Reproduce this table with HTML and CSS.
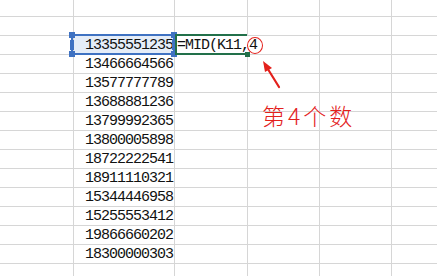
FILE: index.html
```html
<!DOCTYPE html>
<html>
<head>
<meta charset="utf-8">
<link rel="stylesheet" href="styles.css">
</head>
<body>
<div class="sheet">
  <div class="row first"><div class="c c0"></div><div class="c c1"></div><div class="c c2"></div><div class="c c3"></div><div class="c c4"></div><div class="c c5"></div></div>
  <div class="row"><div class="c c0"></div><div class="c c1"></div><div class="c c2"></div><div class="c c3"></div><div class="c c4"></div><div class="c c5"></div></div>
  <div class="row"><div class="c c0"></div><div class="c c1 num sel">13355551235</div><div class="c c2 formula">=MID(K11,4</div><div class="c c3"></div><div class="c c4"></div><div class="c c5"></div></div>
  <div class="row"><div class="c c0"></div><div class="c c1 num">13466664566</div><div class="c c2"></div><div class="c c3"></div><div class="c c4"></div><div class="c c5"></div></div>
  <div class="row"><div class="c c0"></div><div class="c c1 num">13577777789</div><div class="c c2"></div><div class="c c3"></div><div class="c c4"></div><div class="c c5"></div></div>
  <div class="row"><div class="c c0"></div><div class="c c1 num">13688881236</div><div class="c c2"></div><div class="c c3"></div><div class="c c4"></div><div class="c c5"></div></div>
  <div class="row"><div class="c c0"></div><div class="c c1 num">13799992365</div><div class="c c2"></div><div class="c c3"></div><div class="c c4"></div><div class="c c5"></div></div>
  <div class="row"><div class="c c0"></div><div class="c c1 num">13800005898</div><div class="c c2"></div><div class="c c3"></div><div class="c c4"></div><div class="c c5"></div></div>
  <div class="row"><div class="c c0"></div><div class="c c1 num">18722222541</div><div class="c c2"></div><div class="c c3"></div><div class="c c4"></div><div class="c c5"></div></div>
  <div class="row"><div class="c c0"></div><div class="c c1 num">18911110321</div><div class="c c2"></div><div class="c c3"></div><div class="c c4"></div><div class="c c5"></div></div>
  <div class="row"><div class="c c0"></div><div class="c c1 num">15344446958</div><div class="c c2"></div><div class="c c3"></div><div class="c c4"></div><div class="c c5"></div></div>
  <div class="row"><div class="c c0"></div><div class="c c1 num">15255553412</div><div class="c c2"></div><div class="c c3"></div><div class="c c4"></div><div class="c c5"></div></div>
  <div class="row"><div class="c c0"></div><div class="c c1 num">19866660202</div><div class="c c2"></div><div class="c c3"></div><div class="c c4"></div><div class="c c5"></div></div>
  <div class="row"><div class="c c0"></div><div class="c c1 num">18300000303</div><div class="c c2"></div><div class="c c3"></div><div class="c c4"></div><div class="c c5"></div></div>
  <div class="row"><div class="c c0"></div><div class="c c1"></div><div class="c c2"></div><div class="c c3"></div><div class="c c4"></div><div class="c c5"></div></div>

  <div class="selbox">
    <span class="h h-tl"></span><span class="h h-tr"></span><span class="h h-bl"></span><span class="h h-br"></span>
    <span class="h h-ml"></span><span class="h h-mr"></span>
  </div>
  <div class="editbox"><span class="fill"></span></div>
  <div class="ring"></div>
  <svg class="arrow" width="40" height="40" viewBox="0 0 40 40">
    <line x1="29" y1="36" x2="16" y2="15" stroke="#e3211c" stroke-width="2.2" stroke-linecap="round"/>
    <polygon points="13,10 22,17 15,21" fill="#e3211c"/>
  </svg>
  <div class="note">第4个数</div>
</div>
</body>
</html>
```
FILE: styles.css
```css
html, body { margin: 0; padding: 0; background: #fff; }
.sheet {
  position: relative;
  width: 437px;
  height: 276px;
  overflow: hidden;
  font-family: "Liberation Mono", "DejaVu Sans Mono", monospace;
}
.row { display: flex; height: 19px; }
.row.first { height: 17px; }
.c {
  box-sizing: border-box;
  border-right: 1px solid #d6d6d6;
  border-bottom: 1px solid #d6d6d6;
  flex: none;
  height: 100%;
}
.c0 { width: 74px; }
.c1 { width: 101px; }
.c2 { width: 73px; }
.c3 { width: 72px; }
.c4 { width: 72px; }
.c5 { width: 60px; }
.num {
  text-align: right;
  font-size: 15px;
  letter-spacing: -1px;
  line-height: 20px;
  padding-right: 1px;
  color: #111;
  white-space: nowrap;
}
.sel { background: #e5edf8; }
.formula {
  border-right: none;
  white-space: nowrap;
  overflow: visible;
  font-size: 15px;
  letter-spacing: -1px;
  line-height: 20px;
  padding-left: 2px;
  color: #111;
}
.selbox {
  position: absolute;
  left: 71px;
  top: 34px;
  width: 100px;
  height: 17px;
  border: 2px solid #3f72c2;
}
.h { position: absolute; background: #3f72c2; }
.h-tl { left: -4px; top: -4px; width: 6px; height: 6px; }
.h-tr { right: -4px; top: -4px; width: 6px; height: 6px; }
.h-bl { left: -4px; bottom: -4px; width: 6px; height: 6px; }
.h-br { right: -4px; bottom: -4px; width: 6px; height: 6px; }
.h-ml { left: -3px; top: 4px; width: 4px; height: 10px; }
.h-mr { right: -3px; top: 4px; width: 4px; height: 10px; }
.editbox {
  position: absolute;
  left: 175px;
  top: 34px;
  width: 70px;
  height: 17px;
  border: 2px solid #22704a;
  border-right: none;
}
.fill {
  position: absolute;
  right: -3px;
  bottom: -4px;
  width: 5px;
  height: 5px;
  background: #22704a;
}
.ring {
  position: absolute;
  left: 247px;
  top: 37px;
  width: 14px;
  height: 15px;
  border: 1.5px solid #e3211c;
  border-radius: 50%;
}
.arrow { position: absolute; left: 250px; top: 51px; }
.note {
  position: absolute;
  left: 262px;
  top: 100px;
  font-family: "Noto Sans CJK SC", sans-serif;
  font-size: 23px;
  font-weight: 300;
  letter-spacing: 3px;
  line-height: 30px;
  color: #e3211c;
}
```
